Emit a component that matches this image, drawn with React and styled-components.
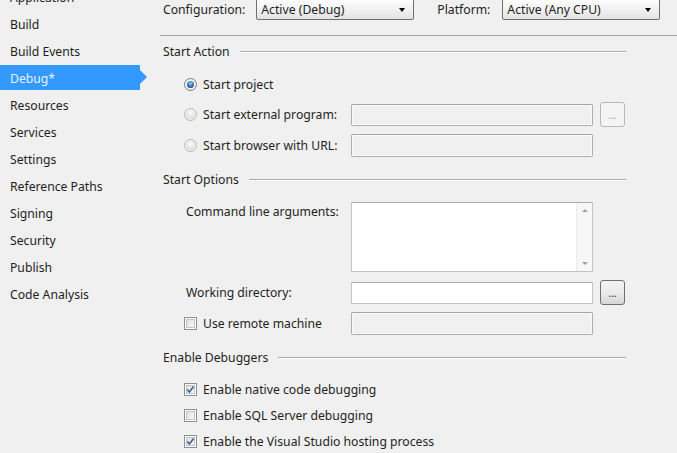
import React from 'react';
import styled, { createGlobalStyle } from 'styled-components';

const GlobalStyle = createGlobalStyle`
  html, body {
    margin: 0;
    padding: 0;
    background: #f0f0f0;
    overflow: hidden;
  }
  body {
    font-family: "Noto Sans", "Open Sans", sans-serif;
    font-size: 12.2px;
    color: #1e1e1e;
  }
`;

const Page = styled.div`
  display: grid;
  grid-template-columns: 160px 1fr;
  width: 677px;
  height: 453px;
  overflow: hidden;
`;

const Nav = styled.ul`
  list-style: none;
  margin: -16px 0 0;
  padding: 0;
`;

const NavItem = styled.li`
  position: relative;
  height: 25px;
  margin-bottom: 2px;
  width: 140px;
  padding: 2px 0 0 10px;
  box-sizing: border-box;
  display: flex;
  align-items: center;
  white-space: nowrap;
  background: ${p => (p.active ? '#3399ff' : 'transparent')};
  color: ${p => (p.active ? '#e6f3ff' : '#1e1e1e')};

  ${p => p.active && `
    &::after {
      content: '';
      position: absolute;
      right: -7px;
      top: 5px;
      border-left: 7px solid #3399ff;
      border-top: 7.5px solid transparent;
      border-bottom: 7.5px solid transparent;
    }
  `}
`;

const Main = styled.div`
  margin-top: -3px;
  display: flex;
  flex-direction: column;
`;

const TopBar = styled.div`
  height: 39px;
  box-sizing: border-box;
  border-bottom: 1px solid #a0a0a0;
  display: flex;
  align-items: flex-start;
  padding: 1px 0 0 3px;
  white-space: nowrap;
`;

const TopLabel = styled.span`
  height: 22px;
  line-height: 23px;
  margin-right: ${p => p.gap || 11}px;
`;

const Select = styled.div`
  width: 158px;
  height: 22px;
  box-sizing: border-box;
  border: 1px solid #707070;
  border-radius: 2px;
  background: linear-gradient(#ffffff, #f2f2f2 50%, #e2e2e2);
  display: flex;
  align-items: center;
  justify-content: space-between;
  padding: 1px 8px 0 4px;
  margin-right: ${p => p.gap || 0}px;

  &::after {
    content: '';
    border-top: 4px solid #000;
    border-left: 3.5px solid transparent;
    border-right: 3.5px solid transparent;
  }
`;

const Body = styled.div`
  padding: 4px 51px 0 3px;
  display: flex;
  flex-direction: column;
`;

const Heading = styled.div`
  height: 22px;
  display: flex;
  align-items: center;
  gap: 10px;
  white-space: nowrap;
  margin-top: ${p => p.top || 0}px;

  &::after {
    content: '';
    flex: 1;
    height: 1px;
    background: #a8a8a8;
    box-shadow: 0 1px 0 #ffffff;
  }
`;

const Row = styled.div`
  display: flex;
  align-items: ${p => (p.top ? 'flex-start' : 'center')};
  height: ${p => p.h || 22}px;
  margin-top: ${p => p.mt || 0}px;
`;

const Lead = styled.div`
  width: 188px;
  flex: none;
  box-sizing: border-box;
  padding-left: ${p => p.indent || 21}px;
  display: flex;
  align-items: center;
  gap: 6px;
  white-space: nowrap;
  padding-top: ${p => p.pt || 0}px;
`;

const Glyph = styled.svg`
  flex: none;
  display: block;
`;

const Field = styled.div`
  width: 242px;
  height: ${p => p.h || 22}px;
  box-sizing: border-box;
  border: 1px solid ${p => (p.disabled ? '#adadad' : '#c4c4c4')};
  border-top-color: ${p => (p.disabled ? '#a5a5a5' : '#abadb3')};
  border-radius: ${p => (p.disabled ? 2 : 0)}px;
  background: ${p => (p.disabled ? '#f0f0f0' : '#ffffff')};
  box-shadow: ${p => (p.disabled ? 'inset 0 0 0 1px #fafafa' : 'none')};
  position: relative;
`;

const Scroll = styled.div`
  position: absolute;
  right: 0;
  top: 0;
  bottom: 0;
  width: 16px;
  background: #f7f7f7;
  border-left: 1px solid #ececec;
  display: flex;
  flex-direction: column;
  justify-content: space-between;
  align-items: center;
  padding: 6px 0;
  box-sizing: border-box;
`;

const Arrow = styled.span`
  border-left: 3.5px solid transparent;
  border-right: 3.5px solid transparent;
  ${p => (p.down
    ? 'border-top: 3.5px solid #a0a0a0;'
    : 'border-bottom: 3.5px solid #a0a0a0;')}
`;

const Browse = styled.button`
  width: 25px;
  height: 25px;
  margin-left: 7px;
  padding: 0 0 6px;
  box-sizing: border-box;
  border: 1px solid ${p => (p.disabled ? '#b8b8b8' : '#707070')};
  border-radius: 3px;
  font: inherit;
  font-size: 10px;
  line-height: 1;
  color: ${p => (p.disabled ? '#a0a0a0' : '#222')};
  background: ${p => (p.disabled
    ? '#f4f4f4'
    : 'linear-gradient(#f2f2f2, #ebebeb 50%, #d6d6d6)')};
  display: flex;
  align-items: flex-end;
  justify-content: center;
`;

const Checks = styled.div`
  display: flex;
  flex-direction: column;
  gap: 4px;
  margin-top: 10px;
`;

const Radio = ({ checked }) => (
  <Glyph width="13" height="13" viewBox="0 0 13 13">
    <defs>
      <radialGradient id={checked ? 'rg1' : 'rg0'} cx="50%" cy="35%" r="60%">
        <stop offset="0" stopColor={checked ? '#8fd2ff' : '#fdfdfd'} />
        <stop offset="1" stopColor={checked ? '#1a4f8a' : '#dcdcdc'} />
      </radialGradient>
    </defs>
    <circle cx="6.5" cy="6.5" r="6" fill="#f4f4f4" stroke={checked ? '#7a7a7a' : '#b4b4b4'} />
    <circle cx="6.5" cy="6.5" r={checked ? 3.5 : 4.5} fill={`url(#${checked ? 'rg1' : 'rg0'})`} />
  </Glyph>
);

const Check = ({ checked }) => (
  <Glyph width="13" height="13" viewBox="0 0 13 13">
    <defs>
      <linearGradient id="cb" x1="0" y1="0" x2="1" y2="1">
        <stop offset="0" stopColor="#dcdcdc" />
        <stop offset="1" stopColor="#fbfbfb" />
      </linearGradient>
    </defs>
    <rect x="0.5" y="0.5" width="12" height="12" fill="#fff" stroke="#8e8f8f" />
    <rect x="2.5" y="2.5" width="8" height="8" fill="url(#cb)" stroke="#c4c4c4" />
    {checked && (
      <path d="M3.3 6.4 L5.4 8.9 L9.6 3.4" fill="none" stroke="#3c5f96" strokeWidth="1.6" />
    )}
  </Glyph>
);

const navItems = [
  'Application', 'Build', 'Build Events', 'Debug*', 'Resources', 'Services',
  'Settings', 'Reference Paths', 'Signing', 'Security', 'Publish', 'Code Analysis',
];

export default function App() {
  return (
    <Page>
      <GlobalStyle />
      <Nav>
        {navItems.map(item => (
          <NavItem key={item} active={item === 'Debug*'}>{item}</NavItem>
        ))}
      </Nav>
      <Main>
        <TopBar>
          <TopLabel gap={11}>Configuration:</TopLabel>
          <Select gap={23}>Active (Debug)</Select>
          <TopLabel gap={12}>Platform:</TopLabel>
          <Select>Active (Any CPU)</Select>
        </TopBar>
        <Body>
          <Heading>Start Action</Heading>
          <Row mt={11}>
            <Lead><Radio checked />Start project</Lead>
          </Row>
          <Row mt={7} h={25}>
            <Lead><Radio />Start external program:</Lead>
            <Field disabled />
            <Browse disabled>...</Browse>
          </Row>
          <Row mt={7} h={23}>
            <Lead><Radio />Start browser with URL:</Lead>
            <Field disabled h={23} />
          </Row>
          <Heading top={11}>Start Options</Heading>
          <Row mt={12} h={70} top>
            <Lead indent={23} pt={1}>Command line arguments:</Lead>
            <Field h={70}>
              <Scroll><Arrow /><Arrow down /></Scroll>
            </Field>
          </Row>
          <Row mt={8} h={25}>
            <Lead indent={23}>Working directory:</Lead>
            <Field />
            <Browse>...</Browse>
          </Row>
          <Row mt={7} h={23}>
            <Lead><Check />Use remote machine</Lead>
            <Field disabled h={23} />
          </Row>
          <Heading top={11}>Enable Debuggers</Heading>
          <Checks>
            <Row><Lead><Check checked />Enable native code debugging</Lead></Row>
            <Row><Lead><Check />Enable SQL Server debugging</Lead></Row>
            <Row><Lead><Check checked />Enable the Visual Studio hosting process</Lead></Row>
          </Checks>
        </Body>
      </Main>
    </Page>
  );
}
